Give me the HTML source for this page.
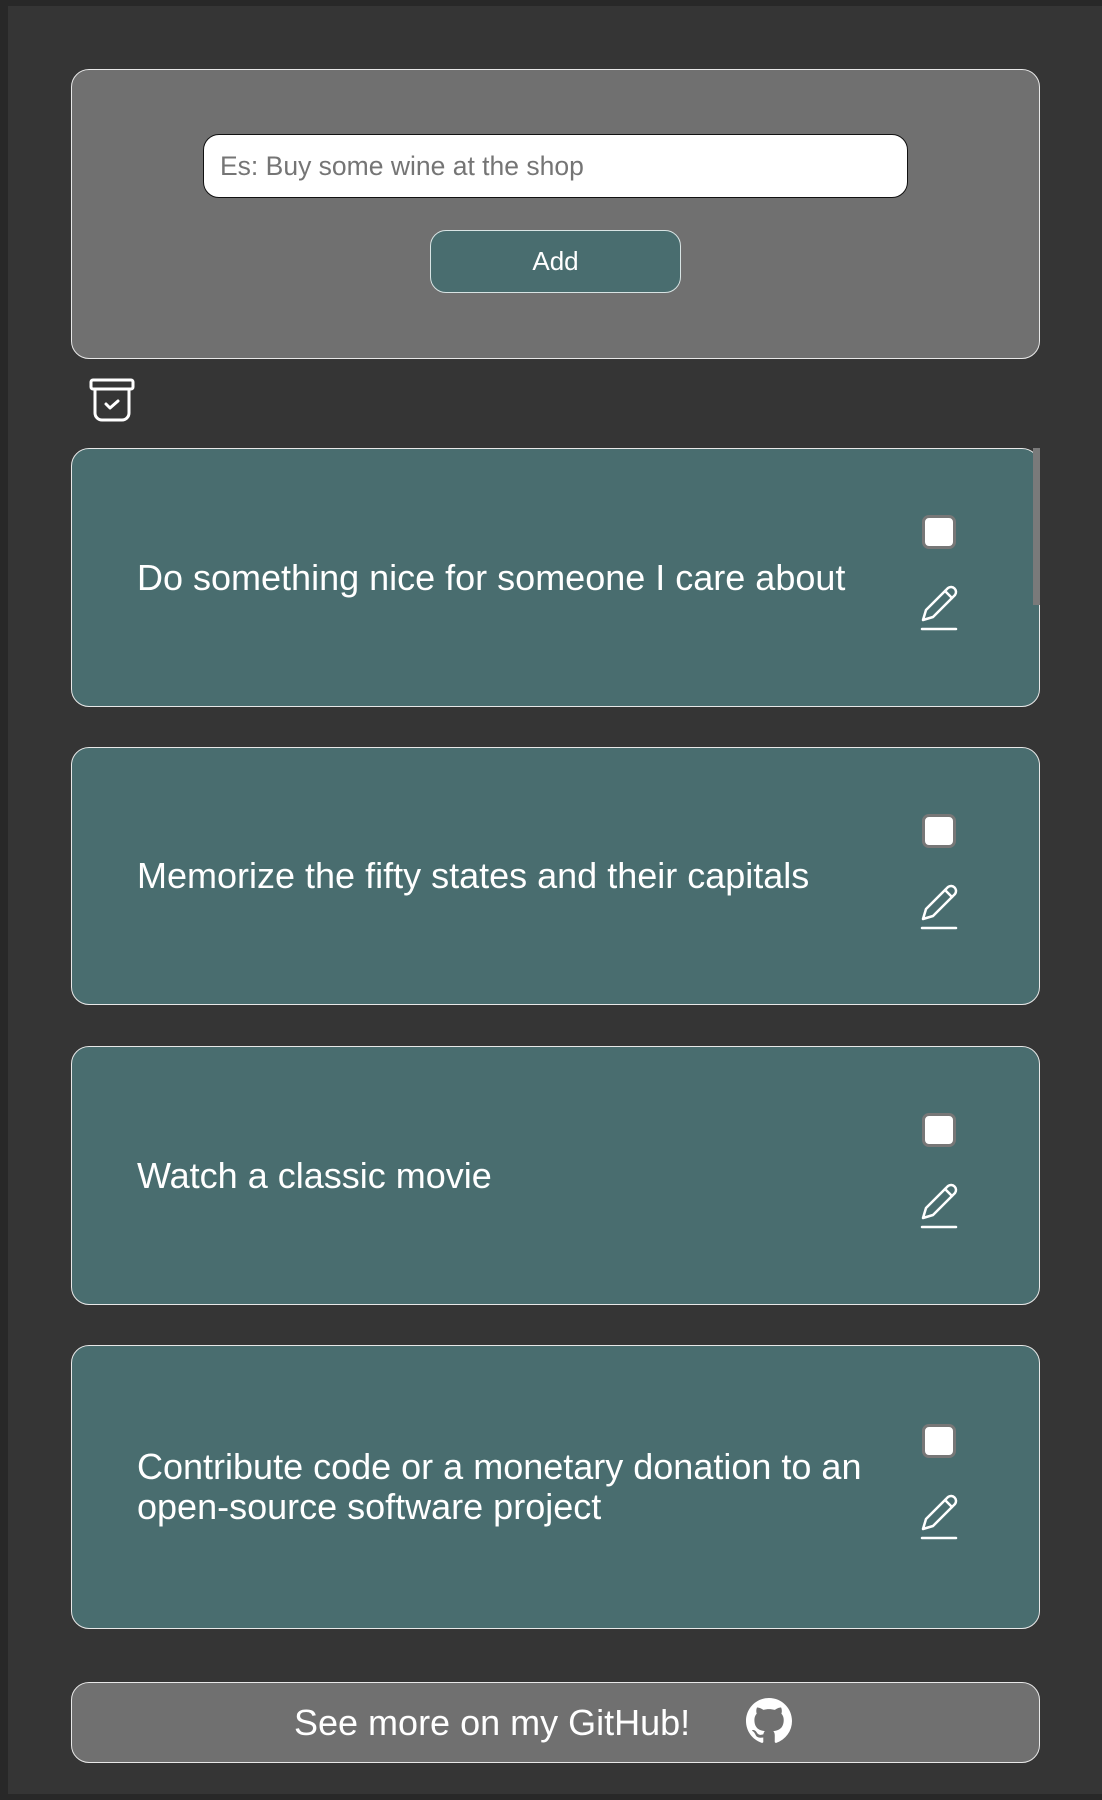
<!DOCTYPE html>
<html><head><meta charset="utf-8"><style>
html,body{margin:0;padding:0;}
body{width:1102px;height:1800px;background:#282828;position:relative;overflow:hidden;font-family:"Liberation Sans",Arial,sans-serif;}
.bg{position:absolute;left:8px;top:6px;width:1094px;height:1788px;background:#353535;}
.form{position:absolute;left:71px;top:69px;width:967px;height:288px;background:#707070;border:1px solid #e8e8e8;border-radius:18px;}
.input{position:absolute;left:203px;top:134px;width:705px;height:64px;background:#fff;border:1px solid #111;border-radius:16px;box-sizing:border-box;padding-left:16px;line-height:62px;font-size:26.5px;color:#757575;}
.add{position:absolute;left:430px;top:230px;width:251px;height:63px;background:#496d6f;border:1px solid #d8e4e4;border-radius:16px;box-sizing:border-box;color:#fff;font-size:26px;text-align:center;line-height:61px;}
.card{position:absolute;left:71px;width:967px;background:#496d6f;border:1px solid #e8e8e8;border-radius:18px;}
.txt{position:absolute;left:65px;right:150px;top:50%;transform:translateY(-50%);color:#fff;font-size:36px;line-height:40px;}
.cb{position:absolute;left:850px;width:34px;height:34px;box-sizing:border-box;background:#fff;border:3px solid #777;border-radius:7px;}
.pen{position:absolute;left:847px;width:40px;height:46px;}
.gh{position:absolute;left:71px;top:1682px;width:967px;height:79px;background:#707070;border:1px solid #e8e8e8;border-radius:18px;}
</style></head><body>
<div class="bg"></div>
<div class="form"></div>
<div class="input">Es: Buy some wine at the shop</div>
<div class="add">Add</div>
<svg style="position:absolute;left:88px;top:377px" width="48" height="46" viewBox="0 0 48 46" fill="none" stroke="#fff" stroke-width="3" stroke-linejoin="round" stroke-linecap="round">
<rect x="3" y="3" width="42" height="9" rx="2"/>
<path d="M7 12v24a7 7 0 0 0 7 7h20a7 7 0 0 0 7-7V12"/>
<path d="M18 27l4 4 8-7"/>
</svg>
<div style="position:absolute;left:1033px;top:448px;width:7px;height:157px;background:#7a7a7a;z-index:2"></div>

<div class="card" style="top:448px;height:257px"><div class="txt">Do something nice for someone I care about</div>
<div class="cb" style="top:66px"></div><svg class="pen" style="top:136px" viewBox="0 0 40 46" fill="none" stroke="#fff" stroke-width="2.5" stroke-linecap="round" stroke-linejoin="round"><path d="M29 3a5 5 0 0 1 7 7L14 32l-10 3 3-10z"/><path d="M26 6l7 7"/><path d="M3 44h34"/></svg></div>

<div class="card" style="top:747px;height:256px"><div class="txt">Memorize the fifty states and their capitals</div>
<div class="cb" style="top:66px"></div><svg class="pen" style="top:136px" viewBox="0 0 40 46" fill="none" stroke="#fff" stroke-width="2.5" stroke-linecap="round" stroke-linejoin="round"><path d="M29 3a5 5 0 0 1 7 7L14 32l-10 3 3-10z"/><path d="M26 6l7 7"/><path d="M3 44h34"/></svg></div>

<div class="card" style="top:1046px;height:257px"><div class="txt">Watch a classic movie</div>
<div class="cb" style="top:66px"></div><svg class="pen" style="top:136px" viewBox="0 0 40 46" fill="none" stroke="#fff" stroke-width="2.5" stroke-linecap="round" stroke-linejoin="round"><path d="M29 3a5 5 0 0 1 7 7L14 32l-10 3 3-10z"/><path d="M26 6l7 7"/><path d="M3 44h34"/></svg></div>

<div class="card" style="top:1345px;height:282px"><div class="txt">Contribute code or a monetary donation to an open-source software project</div>
<div class="cb" style="top:78px"></div><svg class="pen" style="top:148px" viewBox="0 0 40 46" fill="none" stroke="#fff" stroke-width="2.5" stroke-linecap="round" stroke-linejoin="round"><path d="M29 3a5 5 0 0 1 7 7L14 32l-10 3 3-10z"/><path d="M26 6l7 7"/><path d="M3 44h34"/></svg></div>

<div class="gh"><div style="position:absolute;left:222px;top:0;line-height:79px;color:#fff;font-size:36px;">See more on my GitHub!</div>
<svg style="position:absolute;left:674px;top:15px" width="46" height="46" viewBox="0 0 16 16"><path fill="#fff" d="M8 0C3.58 0 0 3.58 0 8c0 3.540 2.290 6.530 5.470 7.590.4.070.55-.17.55-.38 0-.19-.01-.82-.01-1.490-2.010.37-2.530-.49-2.690-.94-.09-.23-.48-.94-.82-1.130-.28-.15-.68-.52-.01-.53.63-.01 1.080.58 1.230.82.72 1.210 1.870.87 2.330.66.07-.52.28-.87.51-1.070-1.780-.2-3.640-.89-3.640-3.950 0-.87.31-1.590.82-2.150-.08-.2-.36-1.020.08-2.120 0 0 .67-.21 2.200.82.64-.18 1.320-.27 2-.27.68 0 1.360.09 2 .27 1.530-1.040 2.200-.82 2.200-.82.44 1.100.16 1.920.08 2.120.51.56.82 1.270.82 2.150 0 3.070-1.870 3.750-3.650 3.950.29.25.54.73.54 1.480 0 1.070-.01 1.930-.01 2.200 0 .21.15.46.55.38A8.013 8.013 0 0016 8c0-4.420-3.580-8-8-8z"/></svg></div>
</body></html>
